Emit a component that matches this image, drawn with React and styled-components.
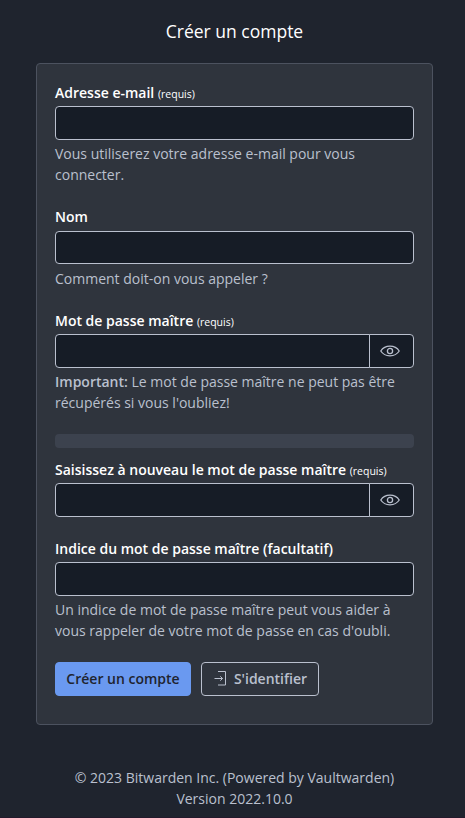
import React from "react";
import styled, { createGlobalStyle } from "styled-components";

const Global = createGlobalStyle`
  *, *::before, *::after { box-sizing: border-box; }
  body {
    margin: 0;
    background: #1f242e;
    color: #ffffff;
    font: 400 14px/21px "Open Sans", "Noto Sans", sans-serif;
  }
`;

const Page = styled.main`
  height: 818px;
  padding: 18px 32px 0 36px;
  overflow: hidden;
  border-bottom: 1px solid #231a2c;
`;

const Title = styled.h1`
  margin: 0 0 18px;
  font-size: 17.5px;
  font-weight: 400;
  line-height: 27px;
  text-align: center;
`;

const Card = styled.form`
  height: 662px;
  padding: 17.9px 18px 0;
  background: #2f343d;
  border: 1px solid #4c525f;
  border-radius: 4px;
`;

const Field = styled.div`
  margin-bottom: 21px;
`;

const Label = styled.label`
  display: block;
  margin-bottom: 3.4px;
  font-weight: 600;
`;

const Required = styled.small`
  font-size: 10.5px;
  font-weight: 400;
  line-height: 1;
`;

const InputGroup = styled.div`
  display: flex;
  height: 33.6px;
`;

const Input = styled.input`
  flex: 1;
  min-width: 0;
  height: 100%;
  padding: 5px 10px;
  background: #161c26;
  color: #ffffff;
  border: 1px solid #bac0ce;
  border-radius: ${(p) => (p.$joined ? "4px 0 0 4px" : "4px")};
  font: inherit;
  outline: none;
`;

const EyeButton = styled.button`
  display: flex;
  align-items: center;
  justify-content: center;
  width: 45px;
  margin: 0 0 0 -1px;
  padding: 0 4px 0 0;
  background: #161c26;
  color: #bac0ce;
  border: 1px solid #bac0ce;
  border-radius: 0 4px 4px 0;
`;

const Hint = styled.p`
  margin: 3.4px 0 0;
  color: #bac0ce;
`;

const Strong = styled.strong`
  font-weight: 600;
`;

const StrengthBar = styled.div`
  height: 14px;
  margin-bottom: 11px;
  background: #3c424e;
  border-radius: 4px;
`;

const Actions = styled.div`
  display: flex;
  gap: 10px;
`;

const Button = styled.button`
  display: flex;
  align-items: center;
  justify-content: center;
  gap: 7px;
  width: ${(p) => (p.$primary ? "136px" : "118px")};
  height: 34px;
  padding: ${(p) => (p.$primary ? "0 0 1px" : "0 0 1px 1px")};
  background: ${(p) => (p.$primary ? "#6a99f0" : "transparent")};
  color: ${(p) => (p.$primary ? "#1f242e" : "#bac0ce")};
  border: 1px solid ${(p) => (p.$primary ? "#6a99f0" : "#bac0ce")};
  border-radius: 4px;
  font: inherit;
  font-weight: 600;
`;

const Footer = styled.footer`
  margin-top: 42px;
  color: #bac0ce;
  text-align: center;
`;

const Eye = () => (
  <svg width="20" height="14" viewBox="0 0 20 14" fill="none" stroke="currentColor" strokeWidth="1.3">
    <path d="M.8 7C2.8 3.9 6 2.200 10 2.200S17.200 3.900 19.200 7C17.200 10.100 14 11.800 10 11.800S2.800 10.100.8 7Z" />
    <circle cx="10" cy="7" r="2.600" />
  </svg>
);

const SignIn = () => (
  <svg width="13" height="15" viewBox="0 0 13 15" fill="none" stroke="currentColor" strokeWidth="1">
    <path d="M4 .5h7.500v13.500H4M.5 7.500h8M6.300 5.300 8.500 7.500 6.300 9.700" />
  </svg>
);

function FormField({ label, required, secret, hint }) {
  return (
    <Field>
      <Label>
        {label} {required && <Required>(requis)</Required>}
      </Label>
      <InputGroup>
        <Input type={secret ? "password" : "text"} $joined={secret} aria-label={label} />
        {secret && (
          <EyeButton type="button" aria-label="Afficher">
            <Eye />
          </EyeButton>
        )}
      </InputGroup>
      {hint && <Hint>{hint}</Hint>}
    </Field>
  );
}

export default function App() {
  return (
    <>
      <Global />
      <Page>
        <Title>Créer un compte</Title>
        <Card>
          <FormField
            label="Adresse e-mail"
            required
            hint="Vous utiliserez votre adresse e-mail pour vous connecter."
          />
          <FormField label="Nom" hint="Comment doit-on vous appeler ?" />
          <FormField
            label="Mot de passe maître"
            required
            secret
            hint={
              <>
                <Strong>Important:</Strong> Le mot de passe maître ne peut pas être récupérés si vous l'oubliez!
              </>
            }
          />
          <StrengthBar />
          <FormField label="Saisissez à nouveau le mot de passe maître" required secret />
          <FormField
            label="Indice du mot de passe maître (facultatif)"
            hint="Un indice de mot de passe maître peut vous aider à vous rappeler de votre mot de passe en cas d'oubli."
          />
          <Actions>
            <Button type="button" $primary>
              Créer un compte
            </Button>
            <Button type="button">
              <SignIn />
              S'identifier
            </Button>
          </Actions>
        </Card>
        <Footer>
          <div>© 2023 Bitwarden Inc. (Powered by Vaultwarden)</div>
          <div>Version 2022.10.0</div>
        </Footer>
      </Page>
    </>
  );
}
